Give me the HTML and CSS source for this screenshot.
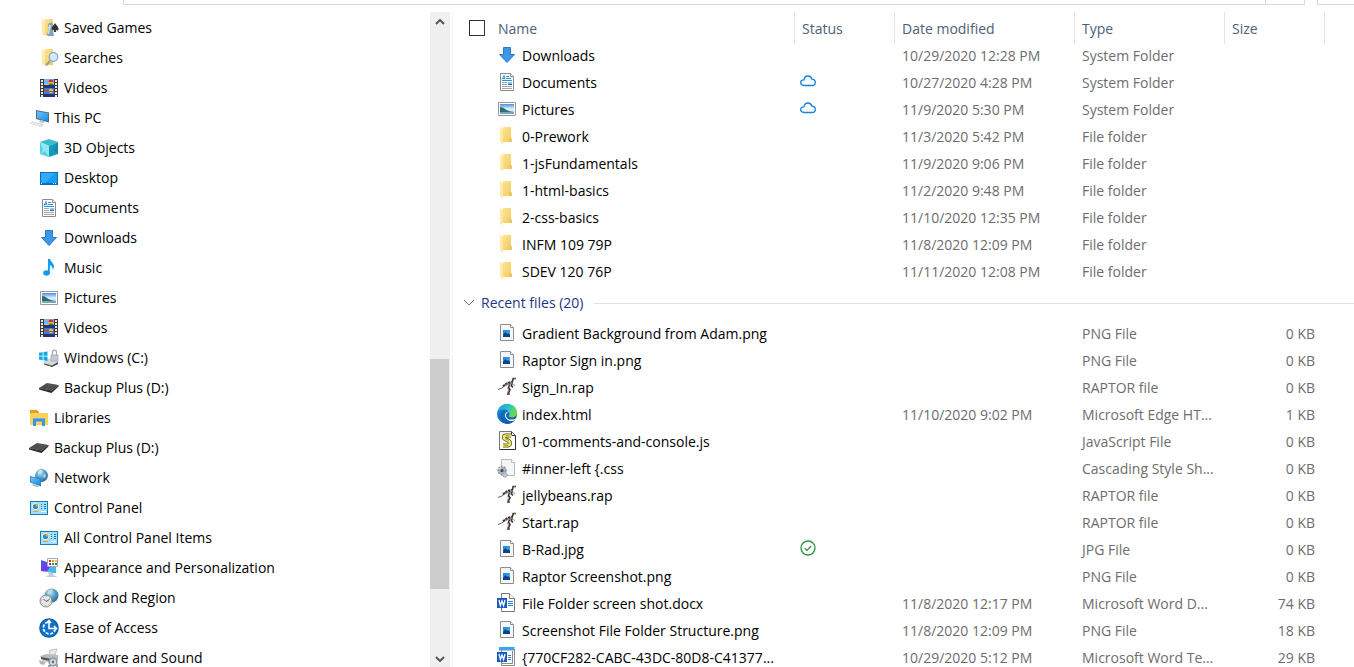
FILE: index.html
```
<!DOCTYPE html>
<html lang="en">
<head>
<meta charset="utf-8">
<title>File Explorer</title>
<link rel="stylesheet" href="styles.css">
</head>
<body>
<svg class="sprite" aria-hidden="true">
  <defs>
    <linearGradient id="gFolder" x1="0" y1="0" x2="1" y2="1"><stop offset="0" stop-color="#ffe48f"/><stop offset="1" stop-color="#f0c95f"/></linearGradient>
    <linearGradient id="gBlue" x1="0" y1="0" x2="1" y2="1"><stop offset="0" stop-color="#6cc6f8"/><stop offset="1" stop-color="#178ae6"/></linearGradient>
    <linearGradient id="gPhoto" x1="0" y1="0" x2="0" y2="1"><stop offset="0" stop-color="#4a8fe0"/><stop offset="0.5" stop-color="#e2f2fc"/><stop offset="1" stop-color="#a9cfe6"/></linearGradient>
    <radialGradient id="gGlobe" cx="0.4" cy="0.3" r="0.8"><stop offset="0" stop-color="#b9e2f2"/><stop offset="0.5" stop-color="#4d9cc4"/><stop offset="1" stop-color="#1f5f8c"/></radialGradient>
    <linearGradient id="gEdge" x1="0" y1="0" x2="1" y2="0.4"><stop offset="0" stop-color="#1b9de2"/><stop offset="0.6" stop-color="#2cc4c4"/><stop offset="1" stop-color="#6cdb4a"/></linearGradient>
    <linearGradient id="gEdgeBody" x1="0" y1="0" x2="1" y2="1"><stop offset="0" stop-color="#1b8ee0"/><stop offset="1" stop-color="#0c4a96"/></linearGradient>
    <linearGradient id="gViolet" x1="0" y1="0" x2="1" y2="1"><stop offset="0" stop-color="#3c66ee"/><stop offset="0.5" stop-color="#7038e0"/><stop offset="1" stop-color="#2b9ff2"/></linearGradient>
    <linearGradient id="gImage" x1="0" y1="0" x2="1" y2="1"><stop offset="0" stop-color="#1a86dd"/><stop offset="1" stop-color="#4fb4f2"/></linearGradient>
  </defs>
  <symbol id="folder" viewBox="0 0 20 20">
    <path fill="url(#gFolder)" d="M6 1h8v11l1 1v3H6z"/><path fill="#ffe9a8" d="M3 1l3 2v16l-3-3z"/><path fill="#e8bf55" d="M12 12h2l1 1v3h-3z" opacity=".5"/>
  </symbol>
  <symbol id="games" viewBox="0 0 20 20">
    <path fill="url(#gFolder)" d="M6 1h8v16H6z"/><path fill="#ffe9a8" d="M3 1l3 2v15l-3-2z"/>
    <path fill="#333" d="M16 5c1 2 4 4 3.500 6.500q-1 1.500-2.700.5l.4 2h-2.400l.4-2q-2 1-2.800-.5C12 9 15 7 16 5z"/>
    <path fill="#7ba3bd" d="M10 5l3-.5 1 2.500-1.500 3 1.500 3 1 5-6 0-1.500-1 2-4 .5-4-1.500-1z"/><path fill="#d4e5ee" d="M10 7h2l-1 4-1 5H8.500l1.500-5z"/>
  </symbol>
  <symbol id="search" viewBox="0 0 20 20">
    <path fill="url(#gFolder)" d="M6 1h8v16H6z"/><path fill="#ffe9a8" d="M3 1l3 2v15l-3-2z"/>
    <path stroke="#9a9da1" stroke-width="2" d="M11 13l-4 4.500"/><circle cx="14.500" cy="9" r="4.300" fill="#cdeafa" stroke="#7fa9c8" stroke-width="1.200"/>
    <path d="M12 8q1-2 3-2" stroke="#fff" fill="none"/>
  </symbol>
  <symbol id="video" viewBox="0 0 20 20">
    <path fill="#3a3a3c" d="M1 1h18v18H1z"/><path fill="#7db2f2" d="M5 1h10v8H5z"/><path fill="#3c78df" d="M5 10h10v8H5z"/>
    <path stroke="#e8e8e8" stroke-width="2" stroke-dasharray="2 1" d="M3 2v17M17 2v17"/>
    <path fill="#1d3680" d="M5 7h10v3H5zM5 16h10v3H5z"/><circle cx="12" cy="4" r="2.400" fill="#d92f2f"/><path fill="#f5c518" d="M9.500 4h5v1.500h-5zM6 6h3v1H6z"/><path fill="#37863c" d="M10 6h4v1h-4z"/><circle cx="7.500" cy="13" r="1.600" fill="#d04b38"/><circle cx="12" cy="13" r="2.200" fill="#f3c92b"/><path fill="#d92f2f" d="M10 13h4v1h-4z"/>
  </symbol>
  <symbol id="pc" viewBox="0 0 20 20">
    <path fill="#5d6a75" d="M7 2l13 2.500v10L7 11z"/><path fill="url(#gBlue)" d="M8 3.200l11 2.100v8L8 10.200z"/><path fill="#b7bec4" d="M11 12l4 1v2l-5-1z"/>
    <path fill="#cfd4d8" d="M3 13.500l12 2.500-2.500 3L.5 15.500z"/><path stroke="#fff" stroke-width=".6" d="M2 15l10.500 2.500M5 14.200l-1.500 1.700M8 15l-1.500 1.700M11 15.700l-1.500 1.700"/>
  </symbol>
  <symbol id="cube" viewBox="0 0 20 20">
    <path fill="#39bccf" d="M1 4l9-3 9 3-9 4z"/><path fill="#8fe8f3" d="M1 4l9 4v11l-9-3z"/><path fill="#1699b8" d="M19 4l-9 4v11l9-3z"/><path fill="#46c9df" d="M1 4l3 8-3 4zM1 16l5-3 4 6z" opacity=".8"/><path fill="#0b86a8" d="M19 4l-4 8 4 4z" opacity=".6"/>
  </symbol>
  <symbol id="desktop" viewBox="0 0 20 20">
    <path fill="#0b6fc0" d="M1 4h18v13H1z"/><path fill="#149cf8" d="M2 5h16v10H2z"/><path fill="#47b4ff" d="M2 5h14L6 15H2z" opacity=".6"/><path stroke="#fff" d="M2 15.500h1M14 15.500h1M16 15.500h1"/>
  </symbol>
  <symbol id="doc" viewBox="0 0 20 20">
    <path fill="#fff" stroke="#8b8b8b" d="M3.500 1.500h10l3 3v14h-13z"/><path fill="#eee" stroke="#8b8b8b" d="M13.500 1.500v3h3"/>
    <path stroke="#2d94e2" d="M9 4.500h3M9 6.500h5M5 8.500h10"/><path fill="none" stroke="#2d94e2" d="M5 7.500L7 3.500l1 4M5.500 6.500h2"/><path stroke="#a6a6a6" d="M5 10.500h5M5 12.500h5M5 14.500h10M5 16.500h10"/><path fill="#8fc0e6" d="M11 10h4v3h-4z"/><path fill="#2b5f92" d="M11 12h4v1h-4z"/>
  </symbol>
  <symbol id="down" viewBox="0 0 20 20">
    <path fill="#3c97e8" stroke="#2a7bc9" d="M6.500 2.500h7v7h4L10 17.500 2.500 9.500h4z"/>
  </symbol>
  <symbol id="music" viewBox="0 0 20 20">
    <ellipse cx="7.500" cy="15" rx="3.300" ry="2.700" fill="#0f9af5"/><path fill="#0f9af5" d="M9 1h2q.5 2 2.500 4c2 2 2 5 0 7q.6-4-2.700-5v8.500H9z"/>
  </symbol>
  <symbol id="picture" viewBox="0 0 20 20">
    <path fill="#fff" stroke="#9a9a9a" d="M1.500 3.500h17v13h-17z"/><path fill="url(#gPhoto)" d="M3 5h14v10H3z"/><path fill="#2f6e6e" d="M3 8q3 0 5 2t9 3v.5H3z"/><path fill="#78a9c4" d="M3 13.500h14V15H3z"/>
  </symbol>
  <symbol id="windrive" viewBox="0 0 20 20">
    <path fill="#d6d8da" d="M7 12l7-3 5 1v5l-6 4-8-2.500V13z"/><path fill="#43464a" d="M5 15.500l8 2 6-3.500v2L13 19l-8-2.500z"/><path fill="#75df56" d="M10 16.500h2v1h-2z"/>
    <path fill="none" stroke="#a8adb2" stroke-width="1.400" d="M13.500 7V4q.2-2 2-2t2 2v3"/><path fill="#c3cad1" stroke="#8ea0b0" stroke-width=".6" d="M12 7h7v6h-7z"/>
    <path fill="#10a7ea" d="M0 4.800l3.700-.6v3.600H0zM4.500 4l4-.6v4.400h-4zM0 8.600h3.700v3.600L0 11.600zM4.500 8.600h4V13l-4-.7z"/>
  </symbol>
  <symbol id="drive" viewBox="0 0 20 20">
    <path fill="#4c4d50" d="M0 10l8-5 11.500 2-7 5.500z"/><path fill="#2a2b2d" d="M0 10l12.500 2.500 7-5.500v1.500L12.500 15 0 11.500z"/><path fill="#626467" d="M8 6l8 1.500-6 1z" opacity=".5"/>
  </symbol>
  <symbol id="library" viewBox="0 0 20 20">
    <path fill="#e0a211" d="M1 2h7l2 2v3H1z"/><path fill="#fbd15c" d="M1 5h18v12H1z"/><path fill="#3d93dd" d="M4 10h12v8h-3v-4.500H7V18H4z"/><path fill="#6bb3f0" d="M4 10h12v1H4z"/>
  </symbol>
  <symbol id="network" viewBox="0 0 20 20">
    <circle cx="12.500" cy="7.500" r="6.500" fill="url(#gGlobe)"/><path fill="#d5f0f8" d="M9 3q3-2 5-.5l-2 2.500-3 1zM15 6l2 1-1 3-2-1z" opacity=".7"/><path fill="#3b84b8" d="M1 8l11 2.500v8L1 14.500z"/><path fill="url(#gBlue)" d="M2 9l9 2.300v6L2 14z"/><path fill="#b4bcc3" d="M4 16l6 2-1.500 1.200L3 17.500z"/>
  </symbol>
  <symbol id="panel" viewBox="0 0 20 20">
    <path fill="#1a7fb4" d="M1 3h18v14H1z"/><path fill="#a5def8" d="M2 4h16v12H2z"/><circle cx="6.500" cy="8.500" r="3.300" fill="#fff"/><circle cx="6.500" cy="8.500" r="2.600" fill="#1b8ed4"/><path fill="#f5a623" d="M6.500 8.500V5.500a3 3 0 0 1 3 3z"/>
    <path stroke="#1579b5" d="M12 6.500h1M15 6.500h2M12 8.500h1M15 8.500h2M12 10.500h1M15 10.500h2"/><path stroke="#f3a01f" d="M4 13.500h5"/><path stroke="#fff" d="M12 13.500h5"/>
  </symbol>
  <symbol id="appearance" viewBox="0 0 20 20">
    <path fill="url(#gViolet)" d="M2 2l15 5v8L2 13z"/><path fill="#45b6f6" d="M11 9l6-1v7l-9-1z"/><path fill="#c5cbd0" d="M9 14.500l5 .7.500 2.300 3 .5v1H8l-1-1 3-.5z"/><path fill="#fff" stroke="#b0aaa4" d="M8.500.5h10v8h-10z"/>
    <path stroke="#e32626" stroke-width="2" d="M10 3h2"/><path stroke="#f3901d" stroke-width="2" d="M13 3h2"/><path stroke="#f6c51c" stroke-width="2" d="M16 3h2"/><path stroke="#6a35b8" stroke-width="2" d="M10 6h2"/><path stroke="#2f70d9" stroke-width="2" d="M16 6h2"/><path stroke="#2fa045" stroke-width="2" d="M13 6h2"/>
  </symbol>
  <symbol id="clock" viewBox="0 0 20 20">
    <circle cx="12.500" cy="7.500" r="7" fill="url(#gGlobe)"/><path fill="#c8e9d8" d="M8 4q3-4 6-2l-2 3-3 1z" opacity=".7"/><circle cx="7" cy="13" r="6" fill="#e4e6e8" stroke="#85898c"/><path stroke="#55585b" fill="none" d="M4.500 11L7 13.500l3.500-2"/><path stroke="#999" stroke-dasharray="1 2.500" fill="none" d="M7 8.500a4.500 4.500 0 1 1-.1 0"/>
  </symbol>
  <symbol id="ease" viewBox="0 0 20 20">
    <circle cx="10" cy="10" r="9.800" fill="#0b5cab"/><circle cx="10" cy="10" r="8.600" fill="#1272cc"/><path fill="none" stroke="#fff" stroke-width="1.800" stroke-dasharray="3 1.500" d="M9 4a6 6 0 1 0 7 8"/><path fill="none" stroke="#fff" stroke-width="1.600" d="M10 3v7.500h7M15 8l2.500 2.500L15 13M8 5l2-2.500L12 5"/>
  </symbol>
  <symbol id="hardware" viewBox="0 0 20 20">
    <path fill="#e6e8ea" stroke="#a1a5a9" stroke-width=".6" d="M11 2l7-1-2 6-6 0z"/><path fill="#b7bcc0" d="M1 8l6-2 12 1v5l-6 3-9-2z"/><path fill="#4a4e52" d="M2 9l10 2v2L2 11z"/><path fill="#858a8f" d="M0 12l7 2-2 3-4-1z" opacity=".6"/><circle cx="14" cy="14" r="4.600" fill="#8d969e"/><circle cx="14" cy="14" r="3" fill="#dce3e8"/><circle cx="14" cy="14" r="1.400" fill="#66717b"/><path fill="#a1a7ac" d="M9 17h3v2H9zM17 16h2v3h-2z"/>
  </symbol>
  <symbol id="image" viewBox="0 0 20 20">
    <path fill="#f8f8f8" stroke="#8c8c8c" d="M3.500 1.500h10l3 3v13h-13z"/><path fill="#fff" stroke="#8c8c8c" d="M13.500 1.500v3h3"/><path fill="url(#gImage)" d="M6 7h7v7H6z"/><path fill="#0c4285" d="M6 12l2.500-3 2 2 1-1 1.500 2v2H6z"/>
  </symbol>
  <symbol id="raptor" viewBox="0 0 20 20">
    <path fill="none" stroke="#6c6366" stroke-width="1" d="M1 12.500q4-.5 8-5"/><path fill="none" stroke="#3c3638" stroke-width="2" stroke-dasharray="2.500 .6" d="M6 9.500q4-4 9-4.500"/><path fill="none" stroke="#3c3638" stroke-width="1.600" d="M15 6l1.200-4.500H19M13 6l-1.500 4.500 1.500 2-2 4.500h1.800M15 6l-.5 3 1.500 1.500"/><path fill="none" stroke="#a07888" stroke-width=".9" d="M8 9l4-2 2 1.500M10.500 11l1 2-1 3M16 7.500l2 1"/><path stroke="#6d9a48" d="M17 2.500l1-1.500M15 5l-.6 2"/>
  </symbol>
  <symbol id="edge" viewBox="0 0 20 20">
    <circle cx="10" cy="10" r="10" fill="url(#gEdgeBody)"/><path fill="url(#gEdge)" d="M.2 9C1 3.500 5 0 10 0c6 0 10 4 10 8.500 0 3-2.300 5-5 5-2 0-3.300-.7-3.300-1.400 0-.6.800-1 .8-2.300C12.500 7.500 10 5.500 7 5.500 3.500 5.500 1 7 .2 9z"/>
    <path fill="#1260b5" d="M7 7c-2.500 1-4 4-3 7.500 1 3 3.500 5 6 5.500 3 0 6-1.500 8-4-5 2.500-11 .5-11.500-4.500C6.300 9 8 7.500 10 7.500z" opacity=".8"/>
    <path fill="#fff" d="M12 8c-2 0-3.300 1.700-3 3.700.3 2.300 2.500 3.900 5 3.900 2 0 4-.6 5.300-1.600l-.8 1.700c-1.500 1.300-3.500 1.600-5 1.300-3.700-.5-6-3.600-5.500-6.400.4-2 2.300-3.200 4-2.600z"/>
  </symbol>
  <symbol id="js" viewBox="0 0 20 20">
    <path fill="#f6f6f6" stroke="#777" d="M2.500.5h12l4 4v14h-16z"/><path fill="#fff" stroke="#333" d="M14.500.5v4h4v14h-16"/><path fill="none" stroke="#57521b" stroke-width="4" d="M14 4.500H9q-2 0-2 2 0 1.500 3 2.500t3 3q0 2.500-3 2.500H6"/><path fill="none" stroke="#efe566" stroke-width="2.600" d="M14.500 4.500H9q-2 0-2 2 0 1.500 3 2.500t3 3q0 2.500-3 2.500H5.500"/><path stroke="#8a8340" stroke-width=".7" d="M9 4.500h3M8 7.500l4 2M7 14.500h4"/>
  </symbol>
  <symbol id="css" viewBox="0 0 20 20">
    <path fill="#f4f5f6" stroke="#b9bcbf" d="M4.500 1.500h10l3 3v13h-13z"/><path fill="#fff" stroke="#b9bcbf" d="M14.500 1.500v3h3"/><circle cx="5" cy="12.500" r="4" fill="#a6b2bb" stroke="#8c98a1" stroke-width="1.500" stroke-dasharray="1.700 1.200"/><circle cx="5" cy="12.500" r="1.500" fill="#3d444a"/><circle cx="8" cy="17" r="2.400" fill="#bcc7ce" stroke="#8c98a1" stroke-dasharray="1 1"/><path stroke="#e8eef1" d="M2 11l2-1.500"/>
  </symbol>
  <symbol id="word" viewBox="0 0 20 20">
    <path fill="#fff" stroke="#7b7b7b" d="M4.500.5h8l5 5v13h-13z"/><path fill="#fff" stroke="#7b7b7b" d="M12.500.5v5h5"/><path stroke="#2b7cd3" d="M11 8.500h5M11 10.500h5M11 12.500h5"/><path fill="#185abd" d="M0 5h10v10H0z"/><path fill="none" stroke="#fff" stroke-width="1.300" d="M2 7l1.400 5.500L5 8l1.600 4.500L8 7"/>
  </symbol>
  <symbol id="template" viewBox="0 0 20 20">
    <path fill="#fff" stroke="#8b8b8b" d="M4.500 2.500h13v16h-13z"/><path fill="none" stroke="#8b8b8b" d="M15.500 4v12.500H4"/><path fill="#41a5ee" d="M2 0h15.500v3.500H2z"/><path stroke="#2b7cd3" d="M11 8.500h3M11 10.500h3M11 12.500h3"/><path fill="#185abd" d="M0 5h10v10H0z"/><path fill="none" stroke="#fff" stroke-width="1.300" d="M2 7l1.400 5.500L5 8l1.600 4.500L8 7"/>
  </symbol>
  <symbol id="cloud" viewBox="0 0 16 16">
    <path fill="none" stroke="#1283d8" stroke-width="1.300" d="M4 12.500q-3.300-.2-3.300-3T4 6.800Q4.600 3 8 3q3 0 3.900 3.200 3.400.2 3.400 3.200 0 2.900-3.300 3.100z"/>
  </symbol>
  <symbol id="check" viewBox="0 0 16 16">
    <circle cx="8" cy="8" r="7" fill="none" stroke="#2c9341" stroke-width="1.300"/><path fill="none" stroke="#2c9341" stroke-width="1.300" d="M4.800 8.200l2.200 2.200 4.200-4.400"/>
  </symbol>
</svg>

<header class="toolbar">
  <div class="address"><span class="address-refresh"></span></div>
  <div class="search-box"></div>
</header>

<div class="explorer">
  <nav class="sidebar" aria-label="Navigation pane">
    <ul class="tree">
      <li><a class="node child" href="#"><svg class="icon"><use href="#games"/></svg>Saved Games</a></li>
      <li><a class="node child" href="#"><svg class="icon"><use href="#search"/></svg>Searches</a></li>
      <li><a class="node child" href="#"><svg class="icon"><use href="#video"/></svg>Videos</a></li>
      <li><a class="node" href="#"><svg class="icon"><use href="#pc"/></svg>This PC</a></li>
      <li><a class="node child" href="#"><svg class="icon"><use href="#cube"/></svg>3D Objects</a></li>
      <li><a class="node child" href="#"><svg class="icon"><use href="#desktop"/></svg>Desktop</a></li>
      <li><a class="node child" href="#"><svg class="icon"><use href="#doc"/></svg>Documents</a></li>
      <li><a class="node child" href="#"><svg class="icon"><use href="#down"/></svg>Downloads</a></li>
      <li><a class="node child" href="#"><svg class="icon"><use href="#music"/></svg>Music</a></li>
      <li><a class="node child" href="#"><svg class="icon"><use href="#picture"/></svg>Pictures</a></li>
      <li><a class="node child" href="#"><svg class="icon"><use href="#video"/></svg>Videos</a></li>
      <li><a class="node child" href="#"><svg class="icon"><use href="#windrive"/></svg>Windows (C:)</a></li>
      <li><a class="node child" href="#"><svg class="icon"><use href="#drive"/></svg>Backup Plus (D:)</a></li>
      <li><a class="node" href="#"><svg class="icon"><use href="#library"/></svg>Libraries</a></li>
      <li><a class="node" href="#"><svg class="icon"><use href="#drive"/></svg>Backup Plus (D:)</a></li>
      <li><a class="node" href="#"><svg class="icon"><use href="#network"/></svg>Network</a></li>
      <li><a class="node" href="#"><svg class="icon"><use href="#panel"/></svg>Control Panel</a></li>
      <li><a class="node child" href="#"><svg class="icon"><use href="#panel"/></svg>All Control Panel Items</a></li>
      <li><a class="node child" href="#"><svg class="icon"><use href="#appearance"/></svg>Appearance and Personalization</a></li>
      <li><a class="node child" href="#"><svg class="icon"><use href="#clock"/></svg>Clock and Region</a></li>
      <li><a class="node child" href="#"><svg class="icon"><use href="#ease"/></svg>Ease of Access</a></li>
      <li><a class="node child" href="#"><svg class="icon"><use href="#hardware"/></svg>Hardware and Sound</a></li>
    </ul>
  </nav>
  <div class="scrollbar">
    <button class="scroll-button" type="button" aria-label="Scroll up"><svg class="arrow" viewBox="0 0 10 6"><path d="M1 5l4-4 4 4"/></svg></button>
    <div class="track-before"></div>
    <div class="thumb"></div>
    <div class="track-after"></div>
    <button class="scroll-button scroll-down" type="button" aria-label="Scroll down"><svg class="arrow" viewBox="0 0 10 6"><path d="M1 1l4 4 4-4"/></svg></button>
  </div>

  <main class="content">
    <table class="files">
      <colgroup><col class="col-name"><col class="col-status"><col class="col-date"><col class="col-type"><col class="col-size"><col></colgroup>
      <thead>
        <tr>
          <th scope="col"><div class="name-head"><input class="select-all" type="checkbox" id="all" aria-label="Select all"><label for="all">Name</label></div></th>
          <th scope="col">Status</th><th scope="col">Date modified</th><th scope="col">Type</th><th scope="col">Size</th><td></td>
        </tr>
      </thead>
      <tbody>
        <tr><td><div class="name"><svg class="icon"><use href="#down"/></svg>Downloads</div></td><td></td><td>10/29/2020 12:28 PM</td><td>System Folder</td><td></td><td></td></tr>
        <tr><td><div class="name"><svg class="icon"><use href="#doc"/></svg>Documents</div></td><td><svg class="status" role="img" aria-label="Online"><use href="#cloud"/></svg></td><td>10/27/2020 4:28 PM</td><td>System Folder</td><td></td><td></td></tr>
        <tr><td><div class="name"><svg class="icon"><use href="#picture"/></svg>Pictures</div></td><td><svg class="status" role="img" aria-label="Online"><use href="#cloud"/></svg></td><td>11/9/2020 5:30 PM</td><td>System Folder</td><td></td><td></td></tr>
        <tr><td><div class="name"><svg class="icon"><use href="#folder"/></svg>0-Prework</div></td><td></td><td>11/3/2020 5:42 PM</td><td>File folder</td><td></td><td></td></tr>
        <tr><td><div class="name"><svg class="icon"><use href="#folder"/></svg>1-jsFundamentals</div></td><td></td><td>11/9/2020 9:06 PM</td><td>File folder</td><td></td><td></td></tr>
        <tr><td><div class="name"><svg class="icon"><use href="#folder"/></svg>1-html-basics</div></td><td></td><td>11/2/2020 9:48 PM</td><td>File folder</td><td></td><td></td></tr>
        <tr><td><div class="name"><svg class="icon"><use href="#folder"/></svg>2-css-basics</div></td><td></td><td>11/10/2020 12:35 PM</td><td>File folder</td><td></td><td></td></tr>
        <tr><td><div class="name"><svg class="icon"><use href="#folder"/></svg>INFM 109 79P</div></td><td></td><td>11/8/2020 12:09 PM</td><td>File folder</td><td></td><td></td></tr>
        <tr><td><div class="name"><svg class="icon"><use href="#folder"/></svg>SDEV 120 76P</div></td><td></td><td>11/11/2020 12:08 PM</td><td>File folder</td><td></td><td></td></tr>
      </tbody>
      <tbody>
        <tr class="group-row"><td colspan="6"><button class="group" type="button" aria-expanded="true"><svg class="chevron" viewBox="0 0 12 8"><path d="M1 1l5 5 5-5"/></svg>Recent files (20)</button></td></tr>
        <tr><td><div class="name"><svg class="icon"><use href="#image"/></svg>Gradient Background from Adam.png</div></td><td></td><td></td><td>PNG File</td><td>0 KB</td><td></td></tr>
        <tr><td><div class="name"><svg class="icon"><use href="#image"/></svg>Raptor Sign in.png</div></td><td></td><td></td><td>PNG File</td><td>0 KB</td><td></td></tr>
        <tr><td><div class="name"><svg class="icon"><use href="#raptor"/></svg>Sign_In.rap</div></td><td></td><td></td><td>RAPTOR file</td><td>0 KB</td><td></td></tr>
        <tr><td><div class="name"><svg class="icon"><use href="#edge"/></svg>index.html</div></td><td></td><td>11/10/2020 9:02 PM</td><td>Microsoft Edge HT...</td><td>1 KB</td><td></td></tr>
        <tr><td><div class="name"><svg class="icon"><use href="#js"/></svg>01-comments-and-console.js</div></td><td></td><td></td><td>JavaScript File</td><td>0 KB</td><td></td></tr>
        <tr><td><div class="name"><svg class="icon"><use href="#css"/></svg>#inner-left {.css</div></td><td></td><td></td><td>Cascading Style Sh...</td><td>0 KB</td><td></td></tr>
        <tr><td><div class="name"><svg class="icon"><use href="#raptor"/></svg>jellybeans.rap</div></td><td></td><td></td><td>RAPTOR file</td><td>0 KB</td><td></td></tr>
        <tr><td><div class="name"><svg class="icon"><use href="#raptor"/></svg>Start.rap</div></td><td></td><td></td><td>RAPTOR file</td><td>0 KB</td><td></td></tr>
        <tr><td><div class="name"><svg class="icon"><use href="#image"/></svg>B-Rad.jpg</div></td><td><svg class="status" role="img" aria-label="Available offline"><use href="#check"/></svg></td><td></td><td>JPG File</td><td>0 KB</td><td></td></tr>
        <tr><td><div class="name"><svg class="icon"><use href="#image"/></svg>Raptor Screenshot.png</div></td><td></td><td></td><td>PNG File</td><td>0 KB</td><td></td></tr>
        <tr><td><div class="name"><svg class="icon"><use href="#word"/></svg>File Folder screen shot.docx</div></td><td></td><td>11/8/2020 12:17 PM</td><td>Microsoft Word D...</td><td>74 KB</td><td></td></tr>
        <tr><td><div class="name"><svg class="icon"><use href="#image"/></svg>Screenshot File Folder Structure.png</div></td><td></td><td>11/8/2020 12:09 PM</td><td>PNG File</td><td>18 KB</td><td></td></tr>
        <tr><td><div class="name"><svg class="icon"><use href="#template"/></svg>{770CF282-CABC-43DC-80D8-C41377...</div></td><td></td><td>10/29/2020 5:12 PM</td><td>Microsoft Word Te...</td><td>29 KB</td><td></td></tr>
      </tbody>
    </table>
  </main>
</div>
</body>
</html>
```
FILE: styles.css
```
* { box-sizing: border-box; }

body {
  margin: 0;
  height: 100vh;
  display: flex;
  flex-direction: column;
  overflow: hidden;
  background: #fff;
  color: #000;
  font: 14px/20px "Open Sans", "Noto Sans", sans-serif;
}

.sprite { position: absolute; width: 0; height: 0; }

.toolbar {
  flex: none;
  height: 12px;
  padding-left: 123px;
  display: flex;
  align-items: flex-start;
  gap: 12px;
}
.address {
  flex: 1;
  height: 5px;
  display: flex;
  justify-content: flex-end;
  border: 1px solid #d9d9d9;
  border-top: 0;
}
.address-refresh { width: 39px; border-left: 1px solid #d9d9d9; }
.search-box {
  width: 37px;
  height: 5px;
  border: 1px solid #d9d9d9;
  border-width: 0 0 1px 1px;
}

.explorer { flex: 1; min-height: 0; display: flex; }

.sidebar { flex: none; width: 430px; padding-top: 1px; overflow: hidden; }
.tree { margin: 0; padding: 0; list-style: none; }
.node {
  display: flex;
  align-items: center;
  gap: 5px;
  height: 30px;
  padding-left: 29px;
  color: inherit;
  text-decoration: none;
}
.child { padding-left: 39px; }
.icon { flex: none; width: 20px; height: 20px; }

.scrollbar {
  flex: none;
  width: 20px;
  display: flex;
  flex-direction: column;
  background: #f0f0f0;
}
.scroll-button {
  flex: none;
  height: 20px;
  padding: 0;
  border: 0;
  background: none;
  display: grid;
  place-items: center;
}
.scroll-down { height: 16px; }
.arrow { width: 10px; height: 6px; fill: none; stroke: #555; stroke-width: 2; }
.track-before { flex: 327; }
.thumb { flex: 230; margin-right: 1px; background: #cdcdcd; }
.track-after { flex: 62; }

.content {
  flex: 1;
  min-width: 0;
  margin-left: 2px;
  border-left: 1px solid #f5f5f5;
  overflow: hidden;
}
.files {
  width: 100%;
  table-layout: fixed;
  border-collapse: separate;
  border-spacing: 0;
  color: #6d6d6d;
  white-space: nowrap;
}
.col-name { width: 342px; }
.col-status, .col-size { width: 100px; }
.col-date { width: 180px; }
.col-type { width: 150px; }

.files th {
  height: 32px;
  padding: 2px 7px 0;
  border-right: 1px solid #e5e5e5;
  color: #4c607a;
  font-weight: 400;
  text-align: left;
}
.files th:first-child { padding-left: 16px; }
.name-head { display: flex; align-items: flex-start; gap: 13px; }
.select-all {
  appearance: none;
  width: 16px;
  height: 16px;
  margin: 1px 0 0;
  border: 1px solid #333;
  background: #fff;
}

.files td { height: 27px; padding: 0 7px 3px; }
.files td:nth-child(5) { padding-right: 10px; text-align: right; }
.files td:first-child { padding-left: 44px; }
.name { display: flex; align-items: center; gap: 5px; color: #000; }
.name .icon { margin: -3px 0 0; }
.status { display: block; width: 16px; height: 16px; margin: -4px 0 0 -2px; }

.files .group-row td { height: 35px; padding: 0 0 3px 10px; }
.group {
  display: flex;
  align-items: center;
  gap: 6px;
  width: 100%;
  padding: 0;
  border: 0;
  background: none;
  color: #1e3287;
  font: inherit;
}
.group::after { content: ""; flex: 1; height: 1px; margin-left: 4px; background: #e2e2e2; }
.chevron { width: 12px; height: 8px; fill: none; stroke: #777; }
```
